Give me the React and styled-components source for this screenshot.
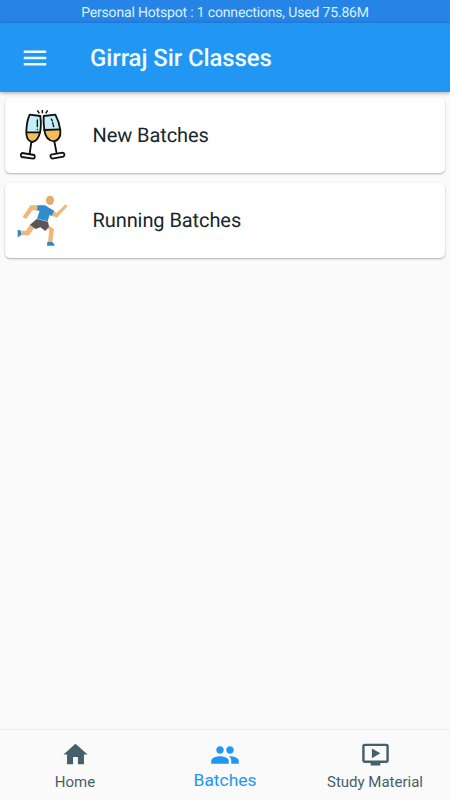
import React, { useState } from "react";
import styled, { createGlobalStyle } from "styled-components";
import { MdHome, MdMenu, MdOndemandVideo, MdPeople } from "react-icons/md";

const GlobalStyle = createGlobalStyle`
  * {
    box-sizing: border-box;
  }

  body {
    margin: 0;
    font-family: Roboto, sans-serif;
    background: #fafafa;
    text-rendering: geometricPrecision;
  }
`

const Screen = styled.div`
  display: flex;
  flex-direction: column;
  height: 100vh;
  overflow: hidden;
`

const StatusBar = styled.div`
  flex: none;
  height: 23px;
  padding-top: 2px;
  background: #2684e6;
  color: #d9f2ff;
  font-size: 14px;
  letter-spacing: -0.17px;
  line-height: 23px;
  text-align: center;
`

const StatusText = styled.span`
  display: inline-block;
  white-space: nowrap;
`

const AppBar = styled.header`
  flex: none;
  display: flex;
  align-items: center;
  height: 69px;
  padding-left: 20px;
  background: #2296f3;
  color: #eefcff;
  box-shadow: 0 1px 4px rgba(0, 0, 0, 0.35);
`

const MenuButton = styled.button`
  display: flex;
  margin: 0 40px 0 0;
  padding: 0;
  border: none;
  background: none;
  color: inherit;
  font-size: 30px;
`

const Title = styled.h1`
  margin: 0;
  font-size: 24px;
  font-weight: 500;
  letter-spacing: -0.1px;
  line-height: 30px;
  white-space: nowrap;
`

const List = styled.main`
  flex: 1;
  display: flex;
  flex-direction: column;
  gap: 10px;
  padding: 6px 5px;
`

const Card = styled.div`
  display: flex;
  align-items: center;
  height: 75px;
  padding: 0 0 2px 5px;
  border-radius: 5px;
  background: #ffffff;
  box-shadow: 0 1px 2px rgba(0, 0, 0, 0.3);
`

const CardPicture = styled.svg`
  flex: none;
  width: 70px;
  height: 64px;
  margin-bottom: 2px;
`

const CardTitle = styled.span`
  margin-left: 12.5px;
  color: #17262b;
  font-size: 20px;
  letter-spacing: -0.08px;
  line-height: 24px;
  white-space: nowrap;
`

const BottomBar = styled.nav`
  flex: none;
  display: flex;
  height: 71px;
  border-top: 1px solid #eeeeee;
  background: #fafafa;
`

const Tab = styled.button`
  flex: 1;
  display: flex;
  flex-direction: column;
  align-items: center;
  margin: 0;
  padding: 10px 0 0;
  border: none;
  background: none;
  color: ${props => props.$active ? "#2296f3" : "#465f6a"};
  font-family: inherit;
  font-size: ${props => props.$active ? "30px" : "29px"};
`

const TabLabel = styled.span`
  margin-top: ${props => props.$active ? "-1px" : "2px"};
  font-size: ${props => props.$active ? "17.4px" : "15px"};
  line-height: 22px;
  white-space: nowrap;
`

function Glasses() {
  return (
    <CardPicture viewBox="0 0 210 192" fill="none" stroke="#101010" strokeWidth="5.5" strokeLinejoin="round" strokeLinecap="round">
      <path d="M51 91 H89 C86 108 77 119 66 120 C55 117 49 106 51 91 Z" fill="#f2bd5c" stroke="none" />
      <path d="M59 38 L91 42 L89 91 H51 C51 71 54 51 59 38 Z" fill="#c4effa" stroke="none" />
      <path d="M59 38 L91 42 C94 65 94 83 87 101 C82 113 76 119 66 120 C52 117 48 103 49 86 C50 67 54 49 59 38 Z" />
      <path d="M50 91 H90 M64 120 L59 155 M36 153 L73 159 C76 163 74 169 70 170 L35 165 C31 161 32 156 36 153 Z" />
      <path d="M104 84 L150 82 C153 102 147 115 132 118 C116 116 107 103 104 84 Z" fill="#f2bd5c" stroke="none" />
      <path d="M101 42 L136 38 L149 82 L104 84 Z" fill="#c4effa" stroke="none" />
      <path d="M101 42 L136 38 C144 53 149 68 151 84 C153 105 147 115 132 118 C113 116 105 101 103 84 C101 69 100 54 101 42 Z" />
      <path d="M103 84 L150 82 M133 118 L140 154 M123 158 L158 152 C164 153 165 161 160 164 L127 170 C121 168 120 161 123 158 Z" />
      <path d="M82 54 V74 M82 82 V83 M124 51 L127 57 M128 62 L131 74" strokeWidth="4" />
      <path d="M82 25 L88 34 M97 24 V34 M113 25 L107 34" strokeWidth="4.5" strokeLinecap="butt" />
    </CardPicture>
  );
}

function Runner() {
  return (
    <CardPicture viewBox="0 0 210 192">
      <ellipse cx="120" cy="40" rx="12" ry="14" fill="#e5aa6e" />
      <path d="M84 55 L61 55 L38 89 L48 97 L68 69 L84 71 Z" fill="#efb77b" />
      <path d="M125 86 L141 92 L173 57 L166 52 L153 65 L140 77 L132 73 Z" fill="#efb77b" />
      <path d="M61 111 L48 131 H32 V144 L57 145 L75 121 Z" fill="#efb77b" />
      <path d="M105 120 L118 128 L114 166 H127 L132 126 L114 115 Z" fill="#efb77b" />
      <path d="M82 55 H105 L133 72 L124 88 L119 83 L113 103 L81 95 L89 71 H82 Z" fill="#318ccc" />
      <path d="M80 96 L114 104 L117 119 L106 132 L91 121 L77 126 L60 113 Z" fill="#595659" />
      <path d="M23 129 H31 L34 143 L25 150 H23 Z M112 165 H127 L133 172 V176 H111 Z" fill="#3486bb" />
    </CardPicture>
  );
}

const tabs = [
  { label: "Home", Icon: MdHome },
  { label: "Batches", Icon: MdPeople },
  { label: "Study Material", Icon: MdOndemandVideo },
];

export default function App() {

  const [activeTab, setActiveTab] = useState("Batches");

  return (
    <>
      <GlobalStyle />
      <Screen>
        <StatusBar>
          <StatusText>Personal Hotspot : 1 connections, Used 75.86M</StatusText>
        </StatusBar>
        <AppBar>
          <MenuButton aria-label="Menu">
            <MdMenu />
          </MenuButton>
          <Title>Girraj Sir Classes</Title>
        </AppBar>
        <List>
          <Card>
            <Glasses />
            <CardTitle>New Batches</CardTitle>
          </Card>
          <Card>
            <Runner />
            <CardTitle>Running Batches</CardTitle>
          </Card>
        </List>
        <BottomBar>
          {tabs.map(({ label, Icon }) => (
            <Tab
              key={label}
              $active={label === activeTab}
              onClick={() => setActiveTab(label)}>
              <Icon />
              <TabLabel $active={label === activeTab}>{label}</TabLabel>
            </Tab>
          ))}
        </BottomBar>
      </Screen>
    </>
  );

}
